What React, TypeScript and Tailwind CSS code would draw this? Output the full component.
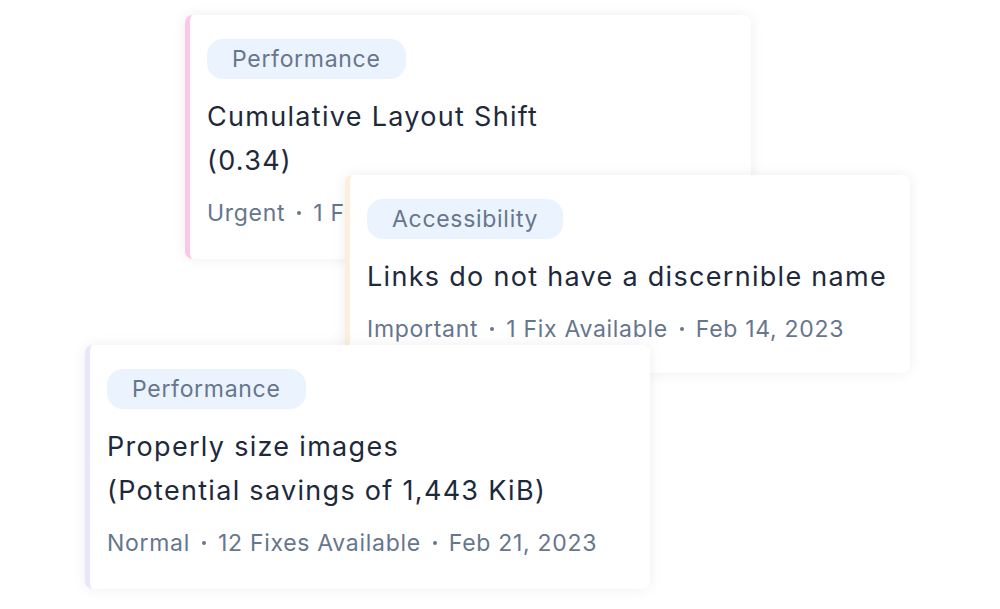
import React from "react";

type CardProps = {
  tag: string;
  title: string[];
  meta: string[];
  accent: string;
  pos: string;
};

function Card({ tag, title, meta, accent, pos }: CardProps) {
  return (
    <div
      className={`absolute ${pos} ${accent} flex flex-col rounded-lg border-l-[5px] bg-white pl-[17px] pt-6 shadow-[0_0_14px_rgba(15,23,42,0.07)]`}
    >
      <div className="flex">
        <span className="flex h-10 items-center rounded-2xl bg-[#ebf3fe] px-[25px] text-[23px] tracking-[0.7px] text-[#66768c]">
          {tag}
        </span>
      </div>
      <div className="mt-4 text-[27px] leading-[44px] tracking-[1.3px] text-[#1e293b]">
        {title.map((t) => (
          <div key={t}>{t}</div>
        ))}
      </div>
      <div className="mt-[14px] flex items-center whitespace-nowrap text-[23px] leading-8 tracking-[0.7px] text-[#66768c]">
        {meta.map((m, i) => (
          <React.Fragment key={m}>
            {i > 0 && <span className="mx-3 inline-block h-1 w-1 rounded-full bg-[#66768c]" />}
            <span>{m}</span>
          </React.Fragment>
        ))}
      </div>
    </div>
  );
}

export default function App() {
  return (
    <div
      className="relative h-[609px] w-[1000px] overflow-hidden bg-white"
      style={{ fontFamily: "Inter, 'Noto Sans', sans-serif" }}
    >
      <Card
        pos="left-[185px] top-[15px] w-[566px] h-[244px]"
        accent="border-[#fcc8e6]"
        tag="Performance"
        title={["Cumulative Layout Shift", "(0.34)"]}
        meta={["Urgent", "1 Fix Available"]}
      />
      <Card
        pos="left-[345px] top-[175px] w-[565px] h-[198px]"
        accent="border-[#fcefdc]"
        tag="Accessibility"
        title={["Links do not have a discernible name"]}
        meta={["Important", "1 Fix Available", "Feb 14, 2023"]}
      />
      <Card
        pos="left-[85px] top-[345px] w-[565px] h-[244px]"
        accent="border-[#e8e5fd]"
        tag="Performance"
        title={["Properly size images", "(Potential savings of 1,443 KiB)"]}
        meta={["Normal", "12 Fixes Available", "Feb 21, 2023"]}
      />
    </div>
  );
}
